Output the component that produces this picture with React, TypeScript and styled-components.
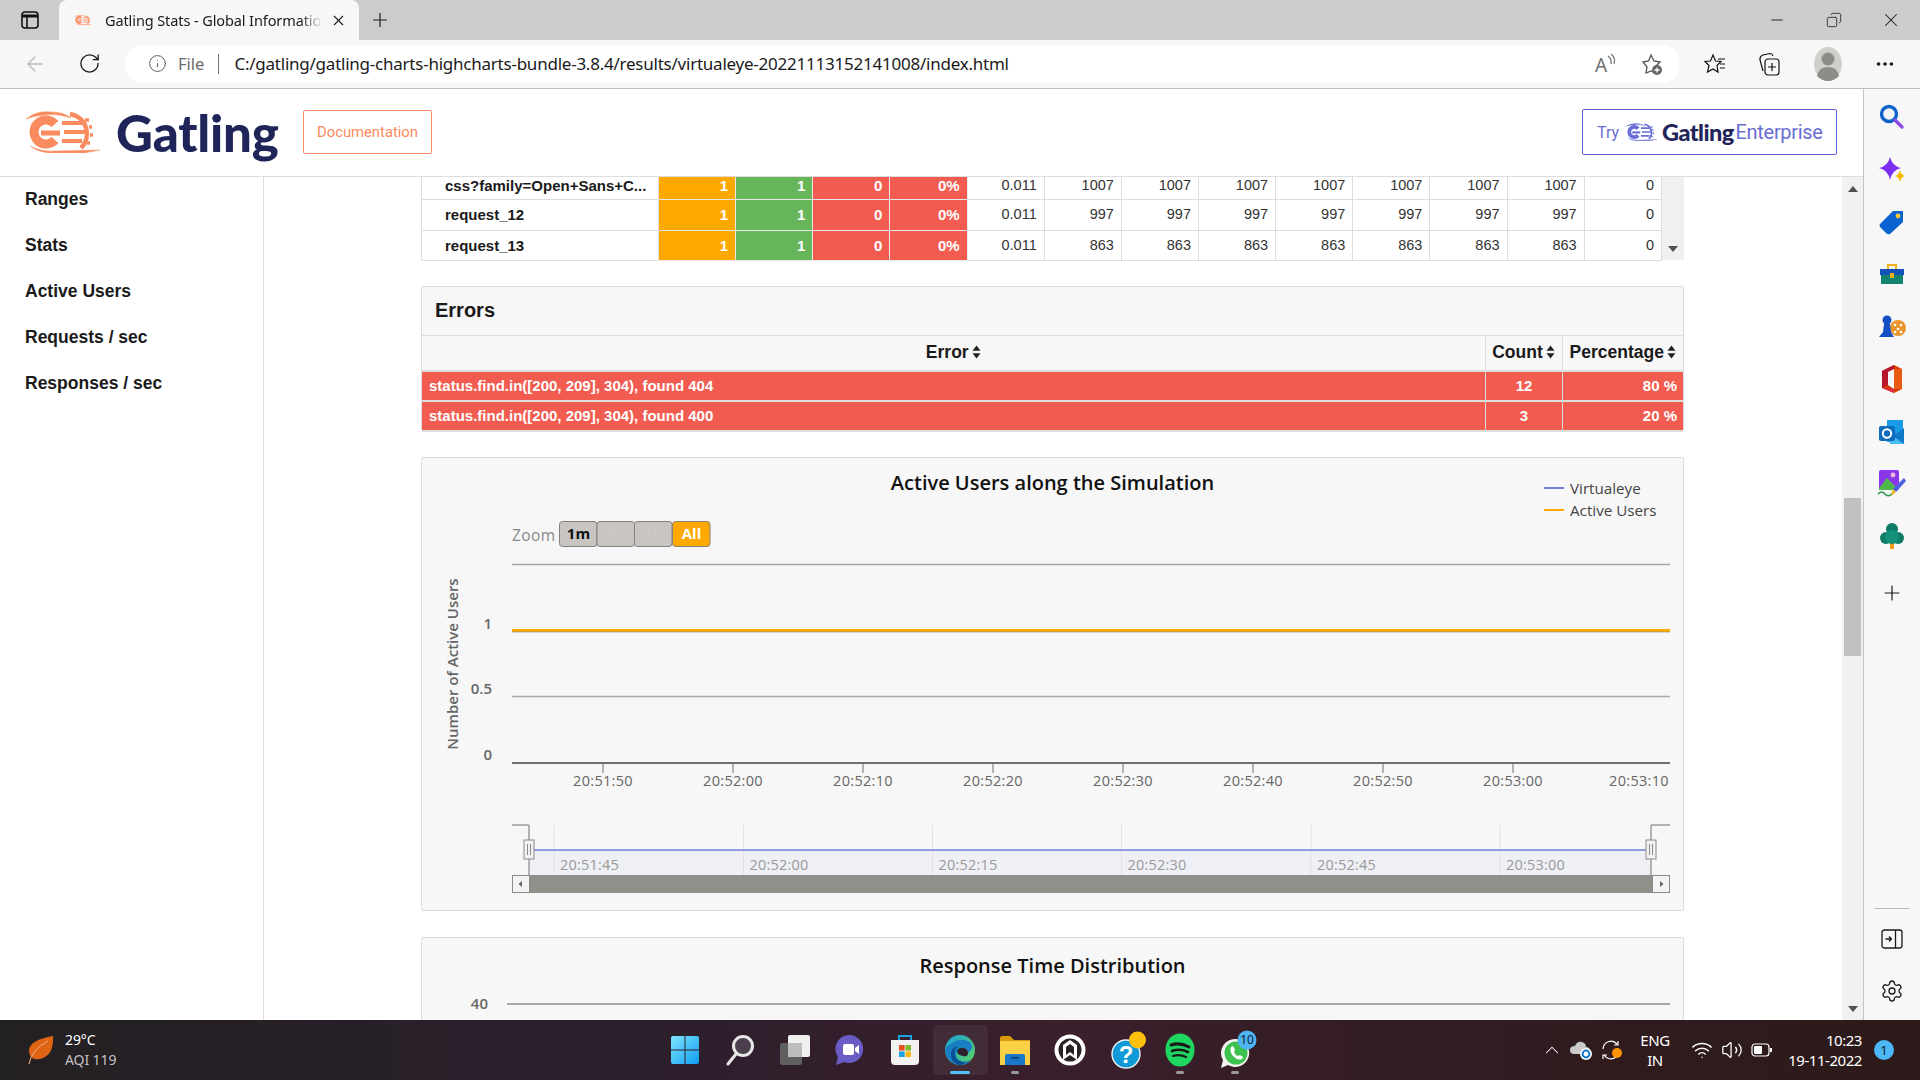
import React from "react";
import styled, { createGlobalStyle } from "styled-components";
import {
  ArrowLeft,
  ChevronUp,
  Copy,
  Ellipsis,
  Info,
  Minus,
  Plus,
  RotateCw,
  Settings,
  Volume2,
  Wifi,
  X,
} from "lucide-react";

const GlobalStyle = createGlobalStyle`
  html, body {
    margin: 0;
    padding: 0;
    overflow: hidden;
    background: #fff;
  }

  * {
    box-sizing: border-box;
  }
`;

const ARIAL = `"Liberation Sans", Arial, sans-serif`;
const UI = `"Noto Sans", "Open Sans", sans-serif`;
const CHART = `"Open Sans", "Noto Sans", sans-serif`;

/* ---------- logos ---------- */

const GatlingMark = ({ width, height, color }: { width: number; height: number; color: string }) => (
  <svg width={width} height={height} viewBox="0 0 76 42" fill="none" stroke={color}>
    <path d="M31 13 A12 12 0 1 0 31 29" strokeWidth="9" />
    <path d="M17 22 H36" strokeWidth="5" />
    <path d="M2 8 Q13 -1 27 1 Q40 1 47 7 Q36 3 26 3.5 Q12 4 2 8 Z" fill={color} strokeWidth="0.5" />
    <path d="M38 12 H58 M40 21 H61 M38 30 H58" strokeWidth="4" />
    <path d="M46 3 A20 20 0 0 1 57 37" strokeWidth="4.5" />
    <path d="M61 9 h4 M65 16 h3 M66 24 h3 M63 32 h3" strokeWidth="3.4" />
    <path d="M6 35 Q18 41 30 40 L76 39 L60 42 L26 42 Q14 41 6 35 Z" fill={color} strokeWidth="0.4" />
  </svg>
);

const SortIcon = () => (
  <svg width="9" height="14" viewBox="0 0 9 14" fill="#222">
    <path d="M4.5 0.5 L8.5 5.8 H0.5 Z M4.5 13.5 L0.5 8.2 H8.5 Z" />
  </svg>
);

/* ---------- browser chrome ---------- */

const Screen = styled.div`
  display: flex;
  flex-direction: column;
  width: 1920px;
  height: 1080px;
  overflow: hidden;
  background: #fff;
`;

const TabStrip = styled.div`
  display: flex;
  align-items: center;
  flex: 0 0 40px;
  padding: 0 1px 0 12px;
  background: #cccccc;
  color: #1a1a1a;
`;

const TabActions = styled.div`
  display: flex;
  align-items: center;
  justify-content: center;
  width: 36px;
  height: 40px;
`;

const Tab = styled.div`
  display: flex;
  align-items: center;
  width: 300px;
  height: 40px;
  margin-left: 11px;
  padding-left: 15px;
  border-radius: 8px 8px 0 0;
  background: #f7f7f7;
`;

const TabTitle = styled.span`
  width: 217px;
  margin-left: 13px;
  overflow: hidden;
  font-family: ${UI};
  font-size: 14.5px;
  letter-spacing: -0.1px;
  white-space: nowrap;
  -webkit-mask-image: linear-gradient(to right, #000 90%, transparent);
  mask-image: linear-gradient(to right, #000 90%, transparent);
`;

const TabClose = styled.div`
  display: flex;
  justify-content: center;
  width: 28px;
  margin-left: 2px;
`;

const NewTab = styled.div`
  display: flex;
  justify-content: center;
  width: 40px;
  margin-left: 1px;
`;

const WindowControls = styled.div`
  display: flex;
  margin-left: auto;
`;

const WindowButton = styled.div`
  display: flex;
  align-items: center;
  justify-content: center;
  width: 57px;
  height: 40px;
`;

const RestoreIcon = styled(Copy)`
  transform: scaleX(-1);
`;

const Toolbar = styled.div`
  display: flex;
  align-items: center;
  flex: 0 0 49px;
  padding: 0 0 1px 7px;
  border-bottom: 1px solid #bdbdbd;
  background: #f7f7f7;
`;

const ToolSlot = styled.div<{ $width?: number; $color?: string }>`
  display: flex;
  align-items: center;
  justify-content: center;
  width: ${(p) => p.$width ?? 56}px;
  height: 38px;
  color: ${(p) => p.$color ?? "#1a1a1a"};
`;

const AddressBar = styled.div`
  display: flex;
  align-items: center;
  width: 1555px;
  height: 38px;
  margin: 0 7px 0 10px;
  padding: 0 5px 0 23px;
  border-radius: 19px;
  background: #fff;
  font-family: ${UI};
`;

const FileLabel = styled.span`
  margin-left: 11px;
  color: #6b6b6b;
  font-size: 16.5px;
`;

const AddressDivider = styled.span`
  width: 1px;
  height: 20px;
  margin: 0 15px 0 14px;
  background: #777;
`;

const Url = styled.span`
  flex: 1;
  color: #1a1a1a;
  font-size: 17px;
  letter-spacing: -0.235px;
  white-space: nowrap;
`;

const Body = styled.div`
  display: flex;
  flex: 0 0 931px;
  min-height: 0;
`;

const Page = styled.div`
  display: flex;
  flex-direction: column;
  flex: 1;
  min-width: 0;
`;

const EdgeRail = styled.div`
  display: flex;
  flex-direction: column;
  align-items: center;
  flex: 0 0 57px;
  padding: 2px 0 3px;
  border-left: 1px solid #c4c4c4;
  background: #f7f7f7;
  color: #1a1a1a;
`;

const RailSlot = styled.div<{ $gap?: number; $height?: number }>`
  display: flex;
  align-items: center;
  justify-content: center;
  flex: 0 0 ${(p) => p.$height ?? 52.4}px;
  width: 100%;
  margin-top: ${(p) => p.$gap ?? 0}px;
`;

const RailDivider = styled.div`
  width: 36px;
  height: 1px;
  margin-top: auto;
  margin-bottom: 4px;
  background: #bdbdbd;
`;

/* ---------- gatling page ---------- */

const Header = styled.header`
  display: flex;
  align-items: center;
  justify-content: space-between;
  flex: 0 0 88px;
  padding: 0 26px 1px 24px;
  border-bottom: 1px solid #ddd;
`;

const Brand = styled.div`
  display: flex;
  align-items: center;
`;

const Wordmark = styled.span`
  width: 162px;
  margin-left: 16px;
  color: #1f2559;
  font-family: Lato, sans-serif;
  font-size: 51px;
  font-weight: 900;
  line-height: 1;
  letter-spacing: -0.2px;
`;

const DocButton = styled.a`
  display: flex;
  align-items: center;
  justify-content: center;
  width: 129px;
  height: 44px;
  margin-left: 25px;
  border: 1px solid #fa8b5f;
  border-radius: 2px;
  color: #fb8a60;
  font-family: Roboto, sans-serif;
  font-size: 14.8px;
`;

const EnterpriseButton = styled.a`
  display: flex;
  align-items: center;
  width: 255px;
  height: 46px;
  padding-left: 14px;
  border: 1px solid #5e62d0;
  border-radius: 2px;
  color: #696dd4;
  font-family: Roboto, sans-serif;
`;

const TryLabel = styled.span`
  margin-right: 6px;
  font-size: 16px;
`;

const EnterpriseBrand = styled.span`
  margin-left: 5px;
  color: #1f2559;
  font-family: Lato, sans-serif;
  font-size: 23.5px;
  font-weight: 900;
  letter-spacing: -0.6px;
`;

const EnterpriseName = styled.span`
  margin-left: 2px;
  font-size: 20px;
  letter-spacing: -0.3px;
`;

const Content = styled.div`
  display: flex;
  flex: 1;
  min-height: 0;
`;

const SideNav = styled.nav`
  display: flex;
  flex-direction: column;
  gap: 4px;
  flex: 0 0 264px;
  padding: 1px 0 0 25px;
  border-right: 1px solid #ddd;
`;

const NavItem = styled.a`
  height: 42px;
  color: #1a1a1a;
  font-family: ${ARIAL};
  font-size: 17.5px;
  font-weight: 700;
  line-height: 42px;
`;

const Main = styled.main`
  flex: 1;
  min-width: 0;
  padding-left: 157px;
  overflow: hidden;
`;

const Column = styled.div`
  display: flex;
  flex-direction: column;
  gap: 26px;
  width: 1263px;
`;

const StatsWrap = styled.div`
  display: flex;
  height: 83px;
`;

const StatsTable = styled.table`
  width: 1241px;
  border-collapse: collapse;
  table-layout: fixed;
  font-family: ${ARIAL};
`;

const StatsRow = styled.tr<{ $height: number; $lift: number }>`
  height: ${(p) => p.$height}px;

  td {
    padding-bottom: ${(p) => p.$lift}px;
    line-height: 1;
  }
`;

const NameCell = styled.td`
  width: 237px;
  padding: 0 0 0 23px;
  border: 1px solid #ddd;
  border-top: 0;
  color: #1a1a1a;
  font-size: 15px;
  font-weight: 700;
  white-space: nowrap;
`;

const ColorCell = styled.td<{ $bg: string }>`
  padding: 0 7px 0 0;
  border: 1px solid #e8e8e8;
  border-top: 0;
  background: ${(p) => p.$bg};
  color: #fff;
  font-size: 15px;
  font-weight: 700;
  text-align: right;
`;

const NumberCell = styled.td`
  padding: 0 7px 0 0;
  border: 1px solid #ddd;
  border-top: 0;
  color: #333;
  font-size: 14.5px;
  text-align: right;
`;

const TableScroll = styled.div`
  display: flex;
  align-items: flex-end;
  justify-content: center;
  flex: 0 0 22px;
  padding-bottom: 8px;
  background: #f0f0f0;
`;

const DownArrow = styled.span`
  border-top: 6px solid #505050;
  border-right: 5px solid transparent;
  border-left: 5px solid transparent;
`;

const UpArrow = styled.span`
  border-right: 5px solid transparent;
  border-bottom: 6px solid #505050;
  border-left: 5px solid transparent;
`;

const Panel = styled.section<{ $height: number }>`
  position: relative;
  flex: 0 0 auto;
  height: ${(p) => p.$height}px;
  border: 1px solid #ddd;
  border-radius: 2px;
  background: #f7f7f7;
`;

const ErrorsTitle = styled.h2`
  height: 48px;
  margin: 0;
  padding-left: 13px;
  color: #1a1a1a;
  font-family: ${ARIAL};
  font-size: 20px;
  font-weight: 700;
  line-height: 46px;
`;

const ErrorsTable = styled.table`
  width: 100%;
  border-collapse: collapse;
  table-layout: fixed;
  font-family: ${ARIAL};
`;

const ErrorHead = styled.th<{ $width?: number }>`
  width: ${(p) => (p.$width ? `${p.$width}px` : "auto")};
  height: 35px;
  padding: 0 6px;
  border: 1px solid #ddd;
  border-width: 1px 0 2px 0;
  color: #1a1a1a;
  font-size: 17.5px;
  font-weight: 700;
  white-space: nowrap;

  & + & {
    border-left-width: 1px;
  }

  svg {
    margin-left: 3px;
    vertical-align: -1px;
  }
`;

const ErrorRow = styled.tr`
  height: 30px;
`;

const ErrorCell = styled.td<{ $align?: string }>`
  padding: 0 6px 0 7px;
  border: 0 solid #dcdcdc;
  border-bottom-width: 2px;
  background: #f25b4f;
  color: #fff;
  font-size: 15px;
  font-weight: 700;
  text-align: ${(p) => p.$align ?? "left"};

  & + & {
    border-left-width: 1px;
  }
`;

const ChartTitle = styled.h3<{ $height: number }>`
  height: ${(p) => p.$height}px;
  margin: 0;
  color: #111;
  font-family: ${CHART};
  font-size: 20px;
  font-weight: 600;
  line-height: ${(p) => p.$height}px;
  text-align: center;
`;

const Legend = styled.div`
  position: absolute;
  top: 21px;
  left: 1122px;
  display: flex;
  flex-direction: column;
  gap: 4px;
`;

const LegendItem = styled.div`
  display: flex;
  align-items: center;
  gap: 6px;
  height: 18px;
  color: #444;
  font-family: ${CHART};
  font-size: 15.2px;
`;

const LegendLine = styled.span<{ $color: string }>`
  width: 20px;
  height: 2px;
  background: ${(p) => p.$color};
`;

const ChartSvg = styled.svg`
  display: block;

  text {
    font-family: ${CHART};
  }
`;

const PageScroll = styled.div`
  display: flex;
  flex-direction: column;
  align-items: center;
  flex: 0 0 21px;
  padding: 9px 0 8px;
  background: #f1f1f1;
`;

const ScrollThumb = styled.div`
  width: 17px;
  height: 158px;
  margin-top: 306px;
  background: #c1c1c1;
`;

const ScrollBottom = styled(DownArrow)`
  margin-top: auto;
`;

/* ---------- taskbar ---------- */

const Taskbar = styled.footer`
  display: grid;
  grid-template-columns: 1fr auto 1fr;
  align-items: center;
  flex: 0 0 60px;
  background: linear-gradient(to right, #232022 0%, #2a1f2c 30%, #3a1f2c 55%, #301c20 80%, #2c1a1a 100%);
  color: #fff;
  font-family: ${UI};
`;

const Weather = styled.div`
  display: flex;
  align-items: center;
  padding-left: 28px;
`;

const WeatherText = styled.div`
  display: flex;
  flex-direction: column;
  margin-left: 11px;
  font-size: 14px;
  letter-spacing: -0.1px;
  line-height: 20px;
`;

const WeatherSub = styled.span`
  color: #c4c0c4;
`;

const Dock = styled.div`
  display: flex;
`;

const DockItem = styled.div<{ $active?: boolean }>`
  position: relative;
  display: flex;
  align-items: center;
  justify-content: center;
  width: 55px;
  height: 50px;
  border-radius: 5px;
  background: ${(p) => (p.$active ? "rgba(255,255,255,0.06)" : "transparent")};
`;

const DockMark = styled.span<{ $active?: boolean }>`
  position: absolute;
  bottom: 1px;
  left: 50%;
  width: ${(p) => (p.$active ? 20 : 8)}px;
  height: 3px;
  border-radius: 2px;
  background: ${(p) => (p.$active ? "#4fc3f7" : "#9b9b9b")};
  transform: translateX(-50%);
`;

const Tray = styled.div`
  display: flex;
  align-items: center;
  justify-content: flex-end;
  padding-right: 26px;
`;

const TraySlot = styled.div<{ $width: number }>`
  display: flex;
  align-items: center;
  justify-content: center;
  width: ${(p) => p.$width}px;
`;

const TrayText = styled.div<{ $align: string; $width: number; $after?: number }>`
  width: ${(p) => p.$width}px;
  margin-right: ${(p) => p.$after ?? 0}px;
  font-size: 15px;
  letter-spacing: -0.45px;
  line-height: 20px;
  text-align: ${(p) => p.$align};
`;

const Notify = styled.div`
  display: flex;
  align-items: center;
  justify-content: center;
  width: 20px;
  height: 20px;
  margin-left: 12px;
  border-radius: 50%;
  background: #4cb8f5;
  color: #10202c;
  font-size: 13px;
`;

/* ---------- small drawings ---------- */

const ReadAloudIcon = () => (
  <svg width="26" height="28" viewBox="0 -2 26 28" fill="none" stroke="#6f6f6f" strokeWidth="1.2">
    <text x="2" y="20" fontSize="19" fill="#6f6f6f" stroke="none" fontFamily="Noto Sans">A</text>
    <path d="M15 4 Q19 7 18 12 M18 2 Q23 6 21 12" />
  </svg>
);

const StarAddIcon = () => (
  <svg width="24" height="24" viewBox="0 0 24 24" fill="none" stroke="#555" strokeWidth="1.3">
    <path d="M11 3 L14 9 L20 10 L16 14 L13 20 L11 19 L6 21 L7 15 L3 10 L8.5 9 Z" />
    <circle cx="17" cy="18" r="5" fill="#666" stroke="none" />
    <path d="M17 15.5 V20.5 M14.5 18 H19.5" stroke="#fff" />
  </svg>
);

const FavoritesIcon = () => (
  <svg width="24" height="24" viewBox="0 0 24 24" fill="none" stroke="#111" strokeWidth="1.2">
    <path d="M10 3 L12.5 9 L18 9.5 L14 13.5 L15 20 L10 17 L4.5 20 L6 13.5 L2 9.5 L7.5 9 Z" />
    <path d="M15 7 H22 M17 12 H22 M17 16 H22" />
  </svg>
);

const CollectionsIcon = () => (
  <svg width="24" height="26" viewBox="2 0 24 26" fill="none" stroke="#111" strokeWidth="1.2">
    <path d="M6 20 L3 9 Q2.5 5 6 4 L13 2.5 Q15 2.5 16 5" />
    <rect x="8" y="8" width="14" height="16" rx="3" />
    <path d="M15 12 V20 M11 16 H19" />
  </svg>
);

const ProfileIcon = () => (
  <svg width="30" height="36" viewBox="0 0 30 36">
    <ellipse cx="15" cy="18" rx="14" ry="17" fill="#cfcfcb" />
    <circle cx="15" cy="13" r="6.5" fill="#8e8c88" />
    <path d="M4 30 Q6 21 15 21 Q24 21 26 30 Q21 35 15 35 Q9 35 4 30 Z" fill="#8e8c88" />
  </svg>
);

const DockPanelIcon = () => (
  <svg width="22" height="22" viewBox="0 0 22 22" fill="none" stroke="#1a1a1a" strokeWidth="1.3">
    <rect x="1" y="2" width="20" height="18" rx="2.5" />
    <path d="M14.5 2 V20" />
    <path d="M4.5 11 H10 M8 8.5 L10.5 11 L8 13.5" />
  </svg>
);

const RailIcons = [
  <svg key="search" width="28" height="28" viewBox="0 0 28 28" fill="none">
    <circle cx="11" cy="11" r="7.5" stroke="#0f62c9" strokeWidth="3.4" />
    <path d="M17 17 L24 24" stroke="#8a4de8" strokeWidth="3.4" strokeLinecap="round" />
  </svg>,
  <svg key="spark" width="30" height="30" viewBox="0 0 30 30">
    <path d="M13 2 Q15 11 24 13 Q15 15 13 25 Q11 15 2 13 Q11 11 13 2 Z" fill="#7a2ff0" />
    <path d="M23 15 Q24 20 28 21 Q24 22 23 27 Q22 22 18 21 Q22 20 23 15 Z" fill="#f8b800" />
  </svg>,
  <svg key="tag" width="28" height="28" viewBox="0 0 28 28">
    <path d="M2 16 L15 3 H25 V14 L12 26 Q10 27 8 25 L2 19 Q1 17 2 16 Z" fill="#0a63d0" />
    <circle cx="20" cy="8" r="2.4" fill="#ffc83a" />
  </svg>,
  <svg key="tools" width="28" height="26" viewBox="0 0 28 26">
    <path d="M10 8 V4 H18 V8" fill="none" stroke="#f2b01e" strokeWidth="2" />
    <rect x="2" y="8" width="24" height="6" fill="#1552b8" />
    <rect x="3" y="14" width="22" height="9" fill="#14836f" />
    <rect x="12" y="12" width="4" height="5" fill="#f2b01e" />
  </svg>,
  <svg key="games" width="30" height="26" viewBox="0 0 30 26">
    <circle cx="21" cy="14" r="8" fill="#e8932b" />
    <circle cx="18" cy="11" r="1.3" fill="#fff" />
    <circle cx="24" cy="11" r="1.3" fill="#fff" />
    <circle cx="21" cy="15" r="1.3" fill="#fff" />
    <circle cx="18" cy="18" r="1.3" fill="#fff" />
    <circle cx="24" cy="18" r="1.3" fill="#fff" />
    <circle cx="10" cy="6" r="4.5" fill="#1450c4" />
    <path d="M7 10 H13 L14 18 L17 23 H2 L6 18 Z" fill="#1450c4" />
  </svg>,
  <svg key="office" width="24" height="30" viewBox="0 0 24 30">
    <path d="M2 7 L14 1 L22 5 V25 L14 29 L2 24 Z" fill="#d83b01" />
    <path d="M2 7 L14 1 V5 L8 8 V21 L2 24 Z" fill="#b7142d" />
    <path d="M2 24 L14 25 V29 Z" fill="#e02b4e" />
    <path d="M8 8 L14 5 V25 L8 21 Z" fill="#f7f7f7" />
    <path d="M14 5 L22 5 V25 L14 25 Z" fill="#eb5a13" />
  </svg>,
  <svg key="outlook" width="28" height="28" viewBox="0 0 28 28">
    <path d="M9 2 H25 V24 H9 Z" fill="#1a9be8" />
    <path d="M12 15 L27 26 H12 Z" fill="#41bdf2" />
    <path d="M26 10 V26 L15 18 Z" fill="#1177c8" />
    <rect x="1" y="8" width="16" height="15" rx="2" fill="#0f6cbd" />
    <circle cx="9" cy="15.5" r="4.2" fill="none" stroke="#fff" strokeWidth="2" />
  </svg>,
  <svg key="image" width="30" height="30" viewBox="0 0 30 30">
    <rect x="2" y="1" width="20" height="20" rx="2" fill="#8a35e8" />
    <circle cx="16" cy="6" r="2.4" fill="#f4b8d8" />
    <path d="M2 19 L10 9 L22 21 H2 Z" fill="#4fb84a" />
    <path d="M1 25 Q5 21 8 25 T16 24" fill="none" stroke="#2c9a52" strokeWidth="1.6" />
    <path d="M27 9 L16 20 L19 23 L29 12 Z" fill="#4d5fe0" />
    <path d="M16 20 L19 23 L14 27 Z" fill="#f3b21d" />
  </svg>,
  <svg key="tree" width="28" height="28" viewBox="0 0 28 28">
    <rect x="12" y="21" width="4" height="6" fill="#f09a1a" />
    <circle cx="14" cy="7" r="6" fill="#0f7a66" />
    <circle cx="8" cy="16" r="6" fill="#0f7a66" />
    <circle cx="20" cy="16" r="6" fill="#0f7a66" />
    <circle cx="14" cy="15" r="7" fill="#129078" />
  </svg>,
];

const LeafIcon = () => (
  <svg width="26" height="28" viewBox="0 0 26 28">
    <path d="M25 0 Q26 20 12 23 Q1 25 1 14 Q2 4 25 0 Z" fill="#df6414" />
    <path d="M1 28 Q3 14 20 5" fill="none" stroke="#f4b385" strokeWidth="1" />
  </svg>
);

const StartIcon = () => (
  <svg width="30" height="30" viewBox="0 0 30 30">
    <defs>
      <linearGradient id="startFill" x1="0" y1="0" x2="1" y2="1">
        <stop offset="0" stopColor="#7fe6ff" />
        <stop offset="1" stopColor="#0f9bf0" />
      </linearGradient>
    </defs>
    <path d="M1 3 Q1 1 3 1 H14.5 V14.5 H1 Z M15.5 1 H27 Q29 1 29 3 V14.5 H15.5 Z M1 15.5 H14.5 V29 H3 Q1 29 1 27 Z M15.5 15.5 H29 V27 Q29 29 27 29 H15.5 Z" fill="url(#startFill)" />
  </svg>
);

const DockIcons: React.ReactNode[] = [
  <StartIcon key="start" />,
  <svg key="search" width="30" height="32" viewBox="0 0 30 32" fill="none">
    <circle cx="18" cy="12" r="9.5" fill="#4b3f4d" stroke="#e8e8e8" strokeWidth="3" />
    <path d="M11 20 L3 30" stroke="#e8e8e8" strokeWidth="3" strokeLinecap="round" />
  </svg>,
  <svg key="view" width="32" height="32" viewBox="0 0 32 32">
    <rect x="1" y="9" width="22" height="22" rx="2" fill="#5f5f5f" />
    <rect x="9" y="1" width="22" height="22" rx="2" fill="#f0f0f0" />
    <rect x="9" y="9" width="14" height="14" fill="#bdbdbd" />
  </svg>,
  <svg key="chat" width="30" height="32" viewBox="0 0 30 32">
    <path d="M15 1 A14 14 0 1 1 9 28 L1 31 L3 23 A14 14 0 0 1 15 1 Z" fill="#6a5cc4" />
    <rect x="8" y="10" width="11" height="11" rx="2" fill="#fff" />
    <path d="M20 14 L24 11 V20 L20 17 Z" fill="#fff" />
  </svg>,
  <svg key="store" width="30" height="32" viewBox="0 0 30 32">
    <path d="M9 6 V2 H21 V6" fill="none" stroke="#1ba1e2" strokeWidth="2" />
    <path d="M1 6 H29 V27 Q29 31 25 31 H5 Q1 31 1 27 Z" fill="#f2f2f2" />
    <rect x="9" y="11" width="5.6" height="5.6" fill="#e8501f" />
    <rect x="15.4" y="11" width="5.6" height="5.6" fill="#7db92c" />
    <rect x="9" y="17.4" width="5.6" height="5.6" fill="#1aa3e8" />
    <rect x="15.4" y="17.4" width="5.6" height="5.6" fill="#fdb813" />
  </svg>,
  <svg key="edge" width="32" height="32" viewBox="0 0 32 32">
    <defs>
      <linearGradient id="edgeTop" x1="0" y1="0" x2="1" y2="1">
        <stop offset="0" stopColor="#1aa3dc" />
        <stop offset="1" stopColor="#5fd35c" />
      </linearGradient>
    </defs>
    <circle cx="16" cy="16" r="15" fill="url(#edgeTop)" />
    <path d="M1 16 Q2 28 14 31 Q22 32 27 26 Q20 29 15 26 Q10 22 13 17 Q15 13 20 14 Q24 15 24 19 Q31 14 26 8 Q16 3 8 9 Q2 12 1 16 Z" fill="#1a7fc2" />
    <path d="M15 31 Q6 28 7 19 Q8 13 14 12 Q9 16 11 22 Q14 29 22 28 Q18 32 15 31 Z" fill="#0d4f94" />
    <path d="M13 17 Q15 13 20 14 Q24 15 24 19 Q24 23 19 22 Q13 21 13 17 Z" fill="#2f2130" />
  </svg>,
  <svg key="folder" width="32" height="32" viewBox="0 0 32 32">
    <path d="M1 4 Q1 2 3 2 H11 L15 6 H31 V12 H1 Z" fill="#d99a08" />
    <path d="M1 7 H31 V31 H1 Z" fill="#fbd044" />
    <path d="M6 31 V22 Q6 20 8 20 H24 Q26 20 26 22 V31 Z" fill="#1a77c9" />
    <rect x="12" y="23" width="8" height="1.6" fill="#0f3f70" />
  </svg>,
  <svg key="ring" width="32" height="32" viewBox="0 0 32 32" fill="none">
    <circle cx="16" cy="16" r="13.5" fill="#2a2028" stroke="#fff" strokeWidth="4" />
    <path d="M9 26 V11 L16 6 L23 11 V26 L16 21 Z" fill="#fff" />
    <path d="M12 21 V13 L16 10 L20 13 V21 L16 18 Z" fill="#2a2028" />
  </svg>,
  <svg key="help" width="42" height="38" viewBox="-7 0 42 38">
    <circle cx="15" cy="23" r="14" fill="#109bd8" stroke="#f0f0f0" strokeWidth="1.4" />
    <text x="15" y="32" fontSize="24" fontWeight="700" textAnchor="middle" fill="#fff" fontFamily="Liberation Sans">?</text>
    <circle cx="26.5" cy="9" r="8.5" fill="#fdc00f" />
  </svg>,
  <svg key="spotify" width="30" height="34" viewBox="0 0 30 34" fill="none" stroke="#1a1a1a" strokeLinecap="round">
    <ellipse cx="15" cy="17" rx="14.5" ry="16.5" fill="#1ed760" stroke="none" />
    <path d="M6 12 Q15 9 24 14" strokeWidth="3" />
    <path d="M7 18 Q15 15 23 19" strokeWidth="2.6" />
    <path d="M8 23 Q15 21 21 24" strokeWidth="2.2" />
  </svg>,
  <svg key="whats" width="44" height="40" viewBox="-6 0 44 40">
    <path d="M17 9 A14 14 0 1 1 9 35 L2 38 L4 30 A14 14 0 0 1 17 9 Z" fill="#f2f2f2" />
    <circle cx="17" cy="23" r="11.5" fill="#3dc14f" />
    <path d="M12 17 L14 16 L16 20 L15 22 Q16 25 19 26 L21 25 L24 27 L23 29 Q19 31 14 26 Q10 21 12 17 Z" fill="#fff" />
    <circle cx="28" cy="10" r="9.5" fill="#4cb5f5" />
    <text x="28" y="14" fontSize="12" textAnchor="middle" fill="#10202c" fontFamily="Noto Sans">10</text>
  </svg>,
];

const CloudIcon = () => (
  <svg width="24" height="20" viewBox="0 0 24 20">
    <path d="M4 14 Q0 14 0 10 Q0 6 5 6 Q7 1 12 2 Q16 3 16 7 Q20 7 20 11 L18 14 Z" fill="#c9c9c9" />
    <circle cx="16" cy="14" r="6" fill="#fff" />
    <circle cx="16" cy="14" r="3.4" fill="none" stroke="#1479c9" strokeWidth="2" />
  </svg>
);

const SyncIcon = () => (
  <svg width="22" height="22" viewBox="0 0 22 22" fill="none" stroke="#fff" strokeWidth="1.2">
    <path d="M2 10 A8 8 0 0 1 16 5 M13 6 H17 V2" />
    <path d="M15 18 A8 8 0 0 1 3 16 M6 16 H2 V20" />
    <circle cx="16" cy="14" r="5" fill="#ff9400" stroke="none" />
  </svg>
);

const BatteryIcon = () => (
  <svg width="22" height="14" viewBox="0 0 22 14" fill="none">
    <rect x="1" y="1" width="17" height="12" rx="3" stroke="#fff" strokeWidth="1.2" />
    <rect x="3" y="3" width="8" height="8" rx="1" fill="#fff" />
    <path d="M20 5 V9" stroke="#fff" strokeWidth="2" />
  </svg>
);

/* ---------- data ---------- */

const STATS = [
  { name: "css?family=Open+Sans+C...", mean: "1007", height: 22, lift: 5 },
  { name: "request_12", mean: "997", height: 31, lift: 0 },
  { name: "request_13", mean: "863", height: 30, lift: 0 },
];

const ERRORS = [
  { text: "status.find.in([200, 209], 304), found 404", count: "12", pct: "80 %" },
  { text: "status.find.in([200, 209], 304), found 400", count: "3", pct: "20 %" },
];

const NAV = ["Ranges", "Stats", "Active Users", "Requests / sec", "Responses / sec"];

const MAIN_TICKS = ["20:51:50", "20:52:00", "20:52:10", "20:52:20", "20:52:30", "20:52:40", "20:52:50", "20:53:00"];

const NAV_TICKS = [
  { x: 554, label: "20:51:45" },
  { x: 743.5, label: "20:52:00" },
  { x: 932.5, label: "20:52:15" },
  { x: 1121.5, label: "20:52:30" },
  { x: 1311, label: "20:52:45" },
  { x: 1500, label: "20:53:00" },
];

const ZOOM_BUTTONS = [
  { x: 559.5, label: "1m", fill: "#c9c6c2", color: "#111" },
  { x: 597, label: "10m", fill: "#c9c6c2", color: "#cbc8c4" },
  { x: 634.5, label: "1h", fill: "#c9c6c2", color: "#cbc8c4" },
  { x: 672.5, label: "All", fill: "#ffa900", color: "#fff" },
];

/* drawing uses page coordinates through the viewBox */
const ActiveUsersChart = () => (
  <ChartSvg width={1261} height={404} viewBox="422 507 1261 404">
    <text x="512" y="541" fontSize="15.5" fill="#888" letterSpacing="0.4">Zoom</text>
    {ZOOM_BUTTONS.map((b) => (
      <g key={b.label}>
        <rect x={b.x} y="521.5" width="37.5" height="25" rx="3" fill={b.fill} stroke="#85827e" />
        <text x={b.x + 19} y="539" fontSize="15" fontWeight="700" textAnchor="middle" fill={b.color}>{b.label}</text>
      </g>
    ))}

    <path d="M512 564.5 H1670 M512 696.5 H1670" stroke="#a8a8a8" strokeWidth="1.4" />
    <path d="M512 763 H1670" stroke="#707070" strokeWidth="2" />
    <path d="M512 630.5 H1670" stroke="#ffa900" strokeWidth="3" />
    <path d="M512 632 H1670" stroke="#8c8c8c" strokeWidth="0.6" />

    <text x="492" y="629" fontSize="15" fontWeight="600" textAnchor="end" fill="#666">1</text>
    <text x="492" y="694" fontSize="15" fontWeight="600" textAnchor="end" fill="#666">0.5</text>
    <text x="492" y="760" fontSize="15" fontWeight="600" textAnchor="end" fill="#666">0</text>
    <text transform="translate(458 664) rotate(-90)" fontSize="15" fontWeight="600" textAnchor="middle" fill="#666">
      Number of Active Users
    </text>

    {MAIN_TICKS.map((t, i) => (
      <g key={t}>
        <path d={`M${603 + i * 130} 763 V773`} stroke="#707070" />
        <text x={603 + i * 130} y="786" fontSize="14.5" textAnchor="middle" fill="#666" letterSpacing="0.3">{t}</text>
      </g>
    ))}
    <text x="1639" y="786" fontSize="14.5" textAnchor="middle" fill="#666" letterSpacing="0.3">20:53:10</text>

    <rect x="529" y="850" width="1122" height="25" fill="#eef0f5" />
    {NAV_TICKS.map((t) => (
      <g key={t.x}>
        <path d={`M${t.x} 825 V875`} stroke="#e2e2e2" />
        <text x={t.x + 6} y="870" fontSize="14.5" fill="#999" letterSpacing="0.2">{t.label}</text>
      </g>
    ))}
    <path d="M534 850 H1647" stroke="#6f7fdc" strokeWidth="1.6" />
    <path d="M512 825 H529 V875 M1670 825 H1651 V875" fill="none" stroke="#707070" />
    {[529, 1651].map((x) => (
      <g key={x}>
        <rect x={x - 5} y="840" width="10" height="19" fill="#f2f2f2" stroke="#8a8a8a" />
        <path d={`M${x - 1.5} 844 V855 M${x + 1.5} 844 V855`} stroke="#8a8a8a" />
      </g>
    ))}
    <rect x="512" y="875" width="1158" height="18" fill="#918f8a" />
    <rect x="512.5" y="875.5" width="17" height="17" fill="#f4f4f4" stroke="#8a8a8a" />
    <rect x="1652.5" y="875.5" width="17" height="17" fill="#f4f4f4" stroke="#8a8a8a" />
    <path d="M522 881 L518.5 884 L522 887 Z M1660 881 L1663.5 884 L1660 887 Z" fill="#666" />
  </ChartSvg>
);

const DistributionChart = () => (
  <ChartSvg width={1261} height={30} viewBox="422 994 1261 30">
    <path d="M507 1004 H1670" stroke="#8f8f8f" strokeWidth="1.4" />
    <text x="488" y="1009" fontSize="15" fontWeight="600" textAnchor="end" fill="#666">40</text>
  </ChartSvg>
);

const App = () => (
  <Screen>
    <GlobalStyle />

    <TabStrip>
      <TabActions>
        <svg width="20" height="20" viewBox="0 0 20 20" fill="none" stroke="#111" strokeWidth="1.6">
          <rect x="2" y="2" width="16" height="16" rx="3" />
          <path d="M2 6 H18" strokeWidth="3" />
          <path d="M7 6 V18" />
        </svg>
      </TabActions>
      <Tab>
        <GatlingMark width={18} height={12} color="#fa8b5f" />
        <TabTitle>Gatling Stats - Global Information</TabTitle>
        <TabClose>
          <X size={17} strokeWidth={1.6} />
        </TabClose>
      </Tab>
      <NewTab>
        <Plus size={22} strokeWidth={1.3} />
      </NewTab>
      <WindowControls>
        <WindowButton>
          <Minus size={18} strokeWidth={1.2} />
        </WindowButton>
        <WindowButton>
          <RestoreIcon size={16} strokeWidth={1.2} />
        </WindowButton>
        <WindowButton>
          <X size={22} strokeWidth={1.1} />
        </WindowButton>
      </WindowControls>
    </TabStrip>

    <Toolbar>
      <ToolSlot $color="#b9b9b9">
        <ArrowLeft size={24} strokeWidth={1.3} />
      </ToolSlot>
      <ToolSlot $width={52}>
        <RotateCw size={23} strokeWidth={1.4} />
      </ToolSlot>
      <AddressBar>
        <Info size={19} strokeWidth={1.2} color="#555" />
        <FileLabel>File</FileLabel>
        <AddressDivider />
        <Url>C:/gatling/gatling-charts-highcharts-bundle-3.8.4/results/virtualeye-20221113152141008/index.html</Url>
        <ToolSlot $width={46}>
          <ReadAloudIcon />
        </ToolSlot>
        <ToolSlot $width={46}>
          <StarAddIcon />
        </ToolSlot>
      </AddressBar>
      <ToolSlot>
        <FavoritesIcon />
      </ToolSlot>
      <ToolSlot>
        <CollectionsIcon />
      </ToolSlot>
      <ToolSlot $width={58}>
        <ProfileIcon />
      </ToolSlot>
      <ToolSlot $width={56}>
        <Ellipsis size={22} strokeWidth={2} />
      </ToolSlot>
    </Toolbar>

    <Body>
      <Page>
        <Header>
          <Brand>
            <GatlingMark width={76} height={42} color="#fa8b5f" />
            <Wordmark>Gatling</Wordmark>
            <DocButton>Documentation</DocButton>
          </Brand>
          <EnterpriseButton>
            <TryLabel>Try</TryLabel>
            <GatlingMark width={32} height={18} color="#696dd4" />
            <EnterpriseBrand>Gatling</EnterpriseBrand>
            <EnterpriseName>Enterprise</EnterpriseName>
          </EnterpriseButton>
        </Header>

        <Content>
          <SideNav>
            {NAV.map((item) => (
              <NavItem key={item}>{item}</NavItem>
            ))}
          </SideNav>

          <Main>
            <Column>
              <StatsWrap>
                <StatsTable>
                  <tbody>
                    {STATS.map((row) => (
                      <StatsRow key={row.name} $height={row.height} $lift={row.lift}>
                        <NameCell>{row.name}</NameCell>
                        <ColorCell $bg="#ffa900">1</ColorCell>
                        <ColorCell $bg="#68b65c">1</ColorCell>
                        <ColorCell $bg="#f25b4f">0</ColorCell>
                        <ColorCell $bg="#f25b4f">0%</ColorCell>
                        <NumberCell>0.011</NumberCell>
                        {Array.from({ length: 7 }, (_, i) => (
                          <NumberCell key={i}>{row.mean}</NumberCell>
                        ))}
                        <NumberCell>0</NumberCell>
                      </StatsRow>
                    ))}
                  </tbody>
                </StatsTable>
                <TableScroll>
                  <DownArrow />
                </TableScroll>
              </StatsWrap>

              <Panel $height={145}>
                <ErrorsTitle>Errors</ErrorsTitle>
                <ErrorsTable>
                  <thead>
                    <tr>
                      <ErrorHead>
                        Error
                        <SortIcon />
                      </ErrorHead>
                      <ErrorHead $width={77}>
                        Count
                        <SortIcon />
                      </ErrorHead>
                      <ErrorHead $width={121}>
                        Percentage
                        <SortIcon />
                      </ErrorHead>
                    </tr>
                  </thead>
                  <tbody>
                    {ERRORS.map((row) => (
                      <ErrorRow key={row.text}>
                        <ErrorCell>{row.text}</ErrorCell>
                        <ErrorCell $align="center">{row.count}</ErrorCell>
                        <ErrorCell $align="right">{row.pct}</ErrorCell>
                      </ErrorRow>
                    ))}
                  </tbody>
                </ErrorsTable>
              </Panel>

              <Panel $height={454}>
                <ChartTitle $height={49}>Active Users along the Simulation</ChartTitle>
                <Legend>
                  <LegendItem>
                    <LegendLine $color="#6f7fdc" />
                    Virtualeye
                  </LegendItem>
                  <LegendItem>
                    <LegendLine $color="#ffa900" />
                    Active Users
                  </LegendItem>
                </Legend>
                <ActiveUsersChart />
              </Panel>

              <Panel $height={200}>
                <ChartTitle $height={56}>Response Time Distribution</ChartTitle>
                <DistributionChart />
              </Panel>
            </Column>
          </Main>

          <PageScroll>
            <UpArrow />
            <ScrollThumb />
            <ScrollBottom />
          </PageScroll>
        </Content>
      </Page>

      <EdgeRail>
        {RailIcons.map((icon) => (
          <RailSlot key={icon.key}>{icon}</RailSlot>
        ))}
        <RailSlot $gap={4}>
          <Plus size={24} strokeWidth={1.2} />
        </RailSlot>
        <RailDivider />
        <RailSlot $height={52}>
          <DockPanelIcon />
        </RailSlot>
        <RailSlot $height={52}>
          <Settings size={24} strokeWidth={1.3} />
        </RailSlot>
      </EdgeRail>
    </Body>

    <Taskbar>
      <Weather>
        <LeafIcon />
        <WeatherText>
          <span>29°C</span>
          <WeatherSub>AQI 119</WeatherSub>
        </WeatherText>
      </Weather>

      <Dock>
        {DockIcons.map((icon, i) => (
          <DockItem key={i} $active={i === 5}>
            {icon}
            {i === 5 && <DockMark $active />}
            {(i === 6 || i === 9 || i === 10) && <DockMark />}
          </DockItem>
        ))}
      </Dock>

      <Tray>
        <TraySlot $width={30}>
          <ChevronUp size={22} strokeWidth={1.1} />
        </TraySlot>
        <TraySlot $width={30}>
          <CloudIcon />
        </TraySlot>
        <TraySlot $width={30}>
          <SyncIcon />
        </TraySlot>
        <TrayText $align="center" $width={56} $after={4}>
          ENG
          <br />
          IN
        </TrayText>
        <TraySlot $width={30}>
          <Wifi size={22} strokeWidth={1.6} />
        </TraySlot>
        <TraySlot $width={30}>
          <Volume2 size={22} strokeWidth={1.4} />
        </TraySlot>
        <TraySlot $width={30}>
          <BatteryIcon />
        </TraySlot>
        <TrayText $align="right" $width={85}>
          10:23
          <br />
          19-11-2022
        </TrayText>
        <Notify>1</Notify>
      </Tray>
    </Taskbar>
  </Screen>
);

export default App;
